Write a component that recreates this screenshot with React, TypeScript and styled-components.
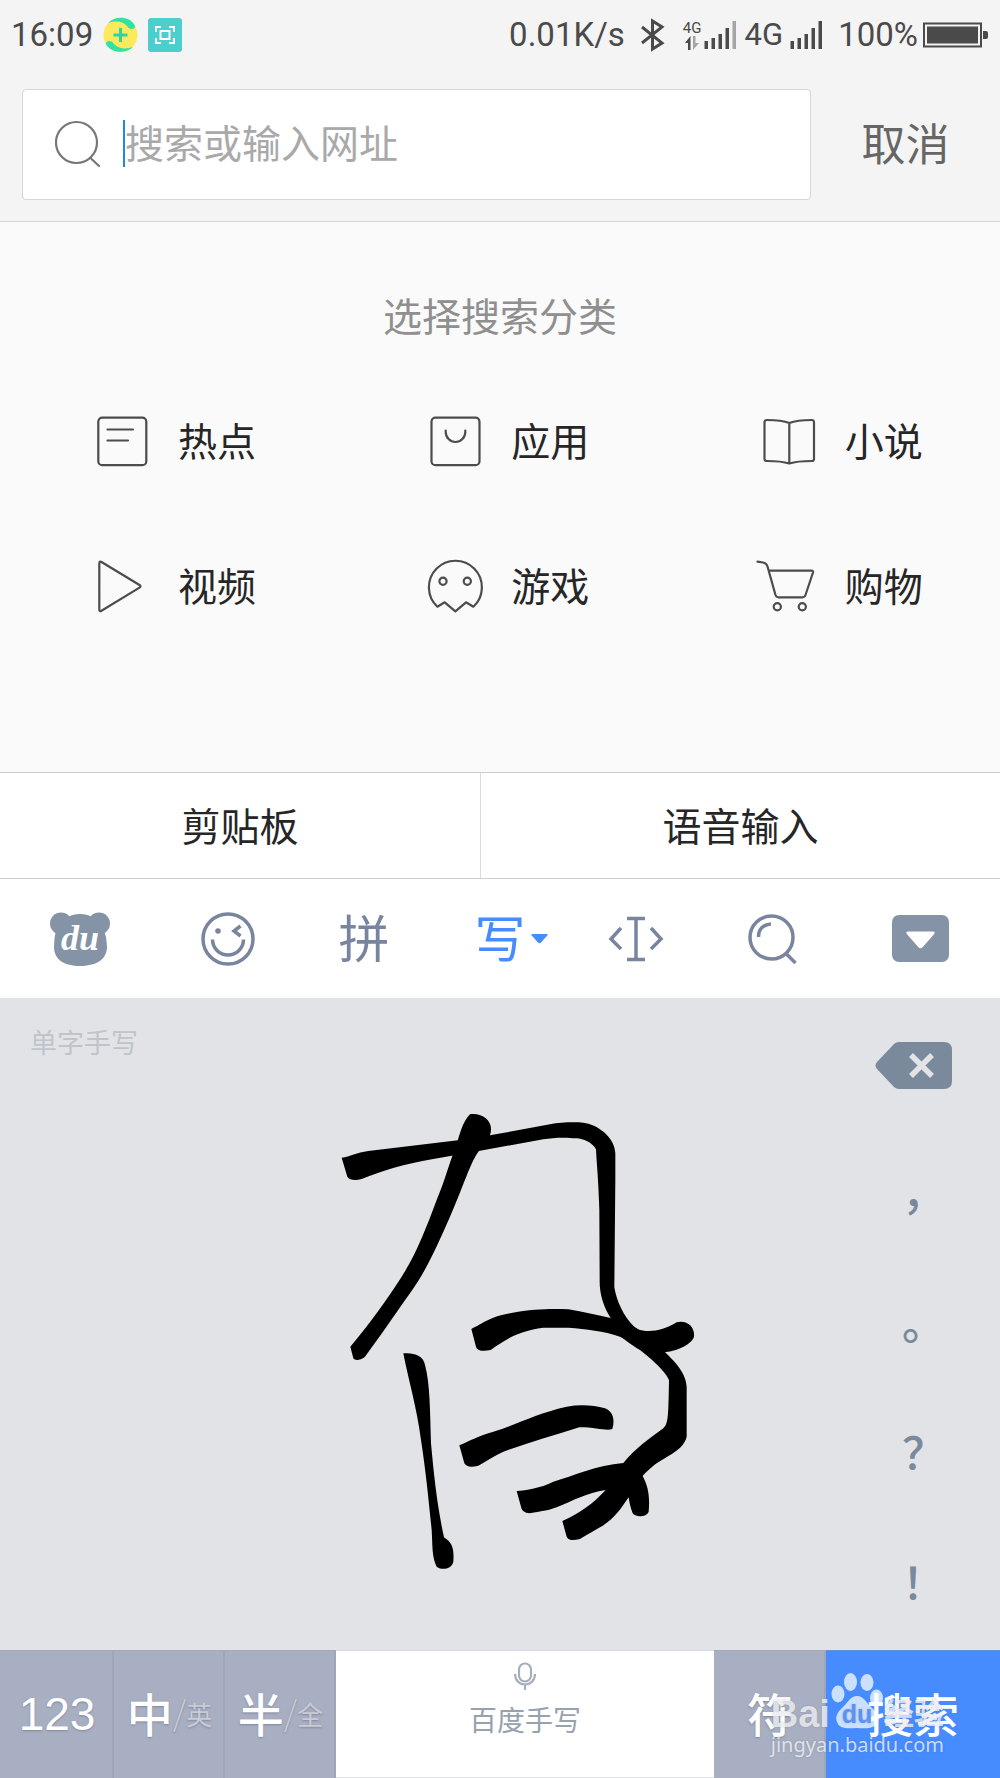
import React from "react";
import styled, { createGlobalStyle } from "styled-components";

const GlobalStyle = createGlobalStyle`
  *, *::before, *::after { box-sizing: border-box; }
  body {
    margin: 0;
    background: #fafafa;
    font-family: "Noto Sans CJK SC", "Noto Sans", sans-serif;
    color: #262626;
  }
  button {
    margin: 0;
    padding: 0;
    border: 0;
    background: none;
    font: inherit;
    color: inherit;
    cursor: pointer;
  }
  svg { display: block; flex: none; }
`;

const Screen = styled.div`
  display: flex;
  flex-direction: column;
  min-height: 100vh;
`;

/* ---------- status bar and search ---------- */

const Top = styled.header`
  background: #f4f4f4;
  border-bottom: 1px solid #d6d6d6;
`;

const StatusBar = styled.div`
  display: flex;
  align-items: center;
  justify-content: space-between;
  height: 70px;
  padding: 0 12px 0 11px;
  font-family: Roboto, "Noto Sans", sans-serif;
  font-size: 33px;
  line-height: 40px;
  color: #4a4a4a;
`;

const StatusGroup = styled.div<{ $gap: number }>`
  display: flex;
  align-items: center;
  gap: ${(p) => p.$gap}px;
`;

const Network = styled.span`
  font-size: 31px;
`;

const DataMark = styled.span`
  display: flex;
  flex-direction: column;
  align-items: center;
  margin-left: 4px;
  font-size: 15px;
  line-height: 16px;
`;

const SearchRow = styled.form`
  display: flex;
  align-items: stretch;
  padding: 19px 0 21px 22px;
`;

const SearchBox = styled.label`
  flex: 1;
  display: flex;
  align-items: center;
  height: 111px;
  padding: 0 32px 2px;
  background: #fff;
  border: 1px solid #d6d6d6;
  border-radius: 4px;
`;

const Caret = styled.span`
  width: 2px;
  height: 47px;
  margin-left: 22px;
  background: #1e88e5;
`;

const SearchInput = styled.input`
  flex: 1;
  min-width: 0;
  height: 60px;
  padding: 0 0 6px;
  border: 0;
  outline: 0;
  background: none;
  font: inherit;
  font-size: 39px;
  caret-color: transparent;
  &::placeholder { color: #a9a9a9; opacity: 1; }
`;

const Cancel = styled.button`
  width: 189px;
  padding-bottom: 6px;
  font-size: 44px;
  color: #666;
`;

/* ---------- categories ---------- */

const Categories = styled.main`
  flex: 1;
  padding: 64px 0 114px;
  background: #fafafa;
`;

const Title = styled.h1`
  margin: 0 0 26px;
  font-size: 39px;
  font-weight: 400;
  line-height: 56px;
  text-align: center;
  color: #8f8f8f;
`;

const CategoryGrid = styled.nav`
  display: grid;
  grid-template-columns: repeat(3, 1fr);
  grid-auto-rows: 145px;
`;

const Category = styled.a`
  display: flex;
  align-items: center;
  gap: 23px;
  padding-left: 89px;
  font-size: 39px;
  color: #262626;
  text-decoration: none;
`;

const CategoryName = styled.span`
  padding-bottom: 4px;
`;

/* ---------- input method ---------- */

const QuickRow = styled.div`
  display: grid;
  grid-template-columns: 12fr 13fr;
  background: #fff;
  border-top: 1px solid #ccc;
  border-bottom: 1px solid #c8d0d0;
`;

const QuickButton = styled.button`
  height: 105px;
  padding-bottom: 4px;
  font-size: 39px;
  & + & { border-left: 1px solid #dcdcdc; }
`;

const Toolbar = styled.div`
  display: grid;
  grid-template-columns: 20fr repeat(5, 17fr) 20fr;
  height: 119px;
  background: #fff;
`;

const Tool = styled.button<{ $active?: boolean }>`
  display: grid;
  grid-template-columns: 1fr auto 1fr;
  align-items: center;
  font-size: 51px;
  line-height: 64px;
  color: ${(p) => (p.$active ? "#468cff" : "#79859e")};
  & > :first-child { grid-column: 2; }
`;

const ToolGlyph = styled.span`
  padding-bottom: 6px;
`;

const Pad = styled.section`
  display: grid;
  grid-template-columns: 413fr 87fr;
  height: 652px;
  background: #e2e3e7;
`;

const Canvas = styled.div`
  min-width: 0;
  overflow: hidden;
`;

const PadLabel = styled.div`
  padding-left: 30px;
  font-size: 27px;
  line-height: 88px;
  color: #bfc4cb;
`;

const Ink = styled.svg`
  margin: 4px 0 0 320px;
`;

const SideKeys = styled.div`
  display: grid;
  grid-template-rows: repeat(5, 1fr);
  padding-top: 2px;
`;

const SideKey = styled.button<{ $glyph?: boolean }>`
  display: flex;
  align-items: center;
  justify-content: center;
  padding-bottom: ${(p) => (p.$glyph ? 8 : 0)}px;
  font-size: 44px;
  font-weight: 500;
  font-feature-settings: "halt";
  color: #7a899c;
`;

const KeyRow = styled.div`
  position: relative;
  display: grid;
  grid-template-columns: 114fr 111fr 111fr 378fr 112fr 174fr;
  height: 128px;
`;

const Key = styled.button<{ $tone?: "plain" | "accent" }>`
  display: flex;
  align-items: center;
  justify-content: center;
  min-width: 0;
  padding-bottom: 6px;
  border-top: 1px solid #a3a9b9;
  box-shadow: inset -2px 0 #9fa6b8;
  background: #a9afc2;
  color: #fff;
  font-size: 46px;
  font-weight: 500;
  text-shadow: 0 1px 2px rgba(90, 98, 120, 0.5);
  ${(p) =>
    p.$tone === "plain" &&
    `
    flex-direction: column;
    gap: 9px;
    padding-bottom: 28px;
    border-color: #d5dbe3;
    box-shadow: inset 0 -1px #dfe1e5;
    background: #fff;
    color: #98a1ae;
    font-size: 28px;
    font-weight: 400;
    line-height: 40px;
    text-shadow: none;
  `}
  ${(p) =>
    p.$tone === "accent" &&
    `
    border-color: #5f8fdf;
    box-shadow: none;
    background: #468cff;
    text-shadow: none;
  `}
`;

const Digits = styled.span`
  padding-top: 4px;
  font-family: "Liberation Sans", Arial, sans-serif;
  font-size: 46px;
  font-weight: 400;
`;

const Slash = styled.span`
  font-size: 34px;
  font-weight: 300;
  color: #c9ccd5;
`;

const Alternate = styled.span`
  padding-top: 4px;
  font-size: 26px;
  font-weight: 400;
  color: #c9ccd5;
`;

const Watermark = styled.div`
  position: absolute;
  right: 56px;
  bottom: 18px;
  color: rgba(255, 255, 255, 0.72);
  text-shadow: 0 0 2px rgba(80, 90, 120, 0.35);
  pointer-events: none;
`;

const WatermarkLogo = styled.div`
  display: flex;
  align-items: flex-end;
  font-family: "Liberation Sans", Arial, "Noto Sans CJK SC", sans-serif;
  font-size: 38px;
  font-weight: 700;
  line-height: 32px;
`;

const WatermarkName = styled.span`
  font-size: 30px;
`;

const WatermarkSite = styled.div`
  font-family: "Noto Sans", sans-serif;
  font-size: 20px;
  line-height: 30px;
`;

/* ---------- drawings ---------- */

const Signal = ({ faded = false }: { faded?: boolean }) => (
  <svg width="33" height="28" viewBox="0 0 33 28" fill="#4a4a4a">
    <path d="M0.500 20h3.500v8h-3.500zM7.500 17h3.500v11h-3.500zM14.500 13h3.500v15h-3.500zM21.500 7h3.500v21h-3.500z" />
    <path d="M28.500 0h3.500v28h-3.500z" fill={faded ? "#a5a5a5" : "#4a4a4a"} />
  </svg>
);

const CategoryIcon = ({ children }: { children: React.ReactNode }) => (
  <svg
    width="66"
    height="66"
    viewBox="0 0 66 66"
    fill="none"
    stroke="#4c4c4c"
    strokeWidth="2.2"
    strokeLinecap="round"
    strokeLinejoin="round"
  >
    {children}
  </svg>
);

const categories = [
  {
    name: "热点",
    icon: (
      <>
        <rect x="9.300" y="9.700" width="48" height="47.500" rx="4" />
        <path d="M18.500 21.500H44M18.500 32.500H39" />
      </>
    ),
  },
  {
    name: "应用",
    icon: (
      <>
        <rect x="9.500" y="9.700" width="48" height="47.500" rx="4" />
        <path d="M23.700 22.500v1.500a9.800 10 0 0 0 19.600 0v-1.500" />
      </>
    ),
  },
  {
    name: "小说",
    icon: (
      <path d="M33.300 15C27 12.500 20 12 11 12q-2.500 0-2.500 2.500V51q0 2 2.500 2c9 0 16 .500 22.300 2.500C39.500 53.500 47 53 56 53q2 0 2-2V14.500Q58 12 56 12C47 12 39.500 12.500 33.300 15V55.500" />
    ),
  },
  {
    name: "视频",
    icon: <path d="M10.300 10.500V56.500q0 2.500 2.200 1.200L50.500 34.600q2-1.300 0-2.600L12.500 9q-2.200-1.200-2.200 1.500Z" />,
  },
  {
    name: "游戏",
    icon: (
      <>
        <path d="M15.400 53.700A26.500 26.500 0 1 1 51.400 53.700L44 49.300 33.400 58.300 22.700 49.300Z" />
        <circle cx="21" cy="28.200" r="3.600" />
        <circle cx="45.300" cy="28.200" r="3.600" />
      </>
    ),
  },
  {
    name: "购物",
    icon: (
      <>
        <path d="M1.500 8.700 7 9.500q3.500.500 4.500 4L19.500 42q.800 2.300 3 2.300H46.500q2.200 0 3-2.300L57 19.500q.500-1.800-1.500-1.800H12.700" />
        <circle cx="21.300" cy="53.700" r="3.600" />
        <circle cx="46.300" cy="53.700" r="3.600" />
      </>
    ),
  },
];

const punctuation = ["，", "。", "？", "！"];

export default function App() {
  return (
    <Screen>
      <GlobalStyle />
      <Top>
        <StatusBar>
          <StatusGroup $gap={10}>
            <span>16:09</span>
            <svg width="35" height="36" viewBox="0 0 35 36">
              <circle cx="17.500" cy="18" r="17" fill="#fdea5c" />
              <path d="M5 6C12-1 25-1 31 7q3 5-3 5-2 0-4-3Q17 2 5 6Z" fill="#30e3a3" />
              <path d="M30 30C23 37 10 36 4 29q-3-5 3-5 2 0 4 3 7 7 19 3Z" fill="#30e3a3" />
              <path d="M17.500 11v14M10.500 18h14" stroke="#2dd3a5" strokeWidth="3" />
            </svg>
            <svg width="34" height="34" viewBox="0 0 34 34">
              <rect width="34" height="34" rx="3" fill="#4bcfce" />
              <path
                d="M8 14V9h5M21 9h5v5M26 20v5h-5M13 25H8v-5M12.500 13h9v8h-9z"
                fill="none"
                stroke="#fff"
                strokeWidth="2"
              />
            </svg>
          </StatusGroup>
          <StatusGroup $gap={7}>
            <span>0.01K/s</span>
            <svg width="40" height="34" viewBox="0 0 40 34" fill="none" stroke="#4a4a4a" strokeWidth="3">
              <path d="M10 9 30 25 20.500 31V3L30 9 10 25" />
            </svg>
            <StatusGroup $gap={3}>
              <DataMark>
                4G
                <svg width="16" height="14" viewBox="0 0 16 14">
                  <path d="M6.500 0v14H4V7H1Z" fill="#4a4a4a" />
                  <path d="M9 14V0h2.500v7H15Z" fill="#a5a5a5" />
                </svg>
              </DataMark>
              <Signal faded />
            </StatusGroup>
            <Network>4G</Network>
            <Signal />
            <StatusGroup $gap={5}>
              <span>&nbsp;100%</span>
              <svg width="65" height="26" viewBox="0 0 65 26" fill="#4a4a4a">
                <rect x="1" y="1.500" width="57" height="23" fill="none" stroke="#4a4a4a" strokeWidth="2" />
                <rect x="4" y="4.500" width="51" height="17" />
                <path d="M60 9h3q2 0 2 2v4q0 2-2 2h-3z" />
              </svg>
            </StatusGroup>
          </StatusGroup>
        </StatusBar>
        <SearchRow onSubmit={(e) => e.preventDefault()}>
          <SearchBox>
            <svg width="46" height="48" viewBox="0 0 46 48" fill="none" stroke="#777" strokeWidth="2.200" strokeLinecap="round">
              <circle cx="21.500" cy="22.500" r="20.500" />
              <path d="m35.500 38 8.500 8" />
            </svg>
            <Caret />
            <SearchInput type="text" aria-label="搜索或输入网址" placeholder="搜索或输入网址" />
          </SearchBox>
          <Cancel type="button">取消</Cancel>
        </SearchRow>
      </Top>

      <Categories>
        <Title>选择搜索分类</Title>
        <CategoryGrid>
          {categories.map((c) => (
            <Category key={c.name} href="#">
              <CategoryIcon>{c.icon}</CategoryIcon>
              <CategoryName>{c.name}</CategoryName>
            </Category>
          ))}
        </CategoryGrid>
      </Categories>

      <QuickRow>
        <QuickButton>剪贴板</QuickButton>
        <QuickButton>语音输入</QuickButton>
      </QuickRow>

      <Toolbar>
        <Tool aria-label="百度输入法">
          <svg width="60" height="54" viewBox="0 0 60 54" fill="#8493a6">
            <circle cx="11" cy="11.500" r="11" />
            <circle cx="49" cy="11.500" r="11" />
            <path d="M30 2C40 2 50 7 54 18q3 8 3 17C57 48 45 54 30 54S4 48 4 35q0-9 2-17C10 7 20 2 30 2Z" />
            <text
              x="30"
              y="38"
              textAnchor="middle"
              fill="#fff"
              fontFamily="Liberation Serif, serif"
              fontSize="36"
              fontStyle="italic"
              fontWeight="700"
            >
              du
            </text>
          </svg>
        </Tool>
        <Tool aria-label="表情">
          <svg width="54" height="54" viewBox="0 0 54 54" fill="none" stroke="#79859e" strokeWidth="3.500">
            <circle cx="27" cy="27" r="25" />
            <path d="M11.500 27.500a15.500 15.500 0 0 0 31 0M39.500 14 33 19l6.500 5" />
            <circle cx="17" cy="19" r="2.800" fill="#79859e" stroke="none" />
          </svg>
        </Tool>
        <Tool>
          <ToolGlyph>拼</ToolGlyph>
        </Tool>
        <Tool $active>
          <ToolGlyph>写</ToolGlyph>
          <svg width="22" height="10" viewBox="0 0 22 10" fill="currentColor">
            <path d="M6.500 0h14q2 0 .800 1.500L15 8.500q-1.500 1.500-3 0L5.700 1.500Q4.500 0 6.500 0Z" />
          </svg>
        </Tool>
        <Tool aria-label="移动光标">
          <svg width="56" height="46" viewBox="0 0 56 46" fill="none" stroke="#79859e" strokeWidth="3.500">
            <path d="M19 2.500h18M19 43.500h18M28 2.500v41M13 12 3 23l10 10M43 12l10 11-10 10" />
          </svg>
        </Tool>
        <Tool aria-label="搜索">
          <svg width="49" height="52" viewBox="0 0 49 52" fill="none" stroke="#79859e" strokeWidth="3.500">
            <circle cx="23.500" cy="24.500" r="21.500" />
            <path d="m38.500 41 9 9M10.500 24q0-12 12.500-13" />
          </svg>
        </Tool>
        <Tool aria-label="收起键盘">
          <svg width="57" height="47" viewBox="0 0 57 47">
            <rect width="57" height="47" rx="7" fill="#8493a6" />
            <path d="M16.500 16.500h24q3.500 0 1.500 2.800L31 31.800q-2.500 3-5 0L15 19.300q-2-2.800 1.500-2.800Z" fill="#fff" />
          </svg>
        </Tool>
      </Toolbar>

      <Pad>
        <Canvas>
          <PadLabel>单字手写</PadLabel>
          <Ink width="400" height="500" viewBox="0 0 1200 1500" fill="#000">
            <path d="M65 203C90 200 110 188 145 183L420 150 510 136 690 103C720 97 760 96 790 98C830 102 885 140 886 190V270L883 590C888 630 915 690 952 717C985 730 1030 722 1070 697C1095 690 1125 705 1122 740C1115 765 1060 787 1030 786C980 770 910 735 872 684C850 650 838 610 839 570L838 360C836 280 830 220 828 178C815 155 790 147 770 145C740 142 700 142 670 148L480 182 340 207C250 222 180 245 125 267C105 272 88 270 82 260Z" />
            <path d="M450 73C485 68 515 90 513 120C512 140 500 160 475 185C450 220 430 290 390 380C350 470 320 540 270 610C220 680 180 740 135 800C120 812 105 812 100 805L91 770C150 700 200 630 245 560C290 490 320 410 350 330C375 270 385 230 398 195C410 170 415 140 425 115C432 98 440 82 450 73Z" />
            <path d="M250 790C280 787 310 795 315 825C330 880 330 960 333 1060C342 1160 352 1250 372 1342C400 1360 402 1380 400 1415C395 1440 360 1440 350 1430C335 1400 338 1370 335 1320C325 1220 318 1150 303 1050C290 950 265 870 250 790Z" />
            <path d="M454 717C490 700 510 680 570 670C650 655 700 657 745 658C790 665 830 675 875 685L950 715 1035 786C1060 812 1098 845 1100 890V1040C1090 1080 1050 1092 1010 1120C990 1135 975 1150 968 1158C985 1190 990 1220 986 1265C980 1282 945 1282 938 1270C930 1250 928 1235 926 1222C900 1260 880 1290 840 1312C810 1330 800 1335 780 1347C760 1352 745 1352 740 1340L727 1293C780 1270 820 1240 857 1200C800 1208 760 1232 710 1252C680 1264 650 1265 630 1270C612 1268 606 1262 603 1250L590 1203C620 1200 660 1195 700 1175C760 1158 830 1125 910 1119C945 1075 990 1045 1030 1015C1045 1000 1045 980 1047 870C1040 850 1000 810 960 780C930 762 915 748 900 740C850 722 800 718 745 713H670C600 722 560 745 512 780C490 785 472 783 468 770Z" />
            <path d="M418 1066C450 1052 470 1040 520 1025C600 1000 650 970 740 950C780 943 820 945 855 955C880 965 885 990 877 1017C860 1024 830 1012 778 1012C700 1037 620 1060 550 1085C520 1100 500 1112 475 1127C455 1132 440 1132 433 1120Z" />
          </Ink>
        </Canvas>
        <SideKeys>
          <SideKey aria-label="删除">
            <svg width="77" height="47" viewBox="0 0 77 47">
              <path d="M24 0H69q8 0 8 8V39q0 8-8 8H24q-3 0-5-2L2 27Q-1 23.500 2 20L19 2q2-2 5-2Z" fill="#7a899c" />
              <path d="m36 13 21 21M57 13 36 34" stroke="#e2e3e7" strokeWidth="5.500" />
            </svg>
          </SideKey>
          {punctuation.map((mark) => (
            <SideKey key={mark} $glyph>
              {mark}
            </SideKey>
          ))}
        </SideKeys>
      </Pad>

      <KeyRow>
        <Key>
          <Digits>123</Digits>
        </Key>
        <Key>
          中<Slash>/</Slash>
          <Alternate>英</Alternate>
        </Key>
        <Key>
          半<Slash>/</Slash>
          <Alternate>全</Alternate>
        </Key>
        <Key $tone="plain">
          <svg width="22" height="28" viewBox="0 0 22 28" fill="none" stroke="#a5aeba" strokeWidth="2.200">
            <rect x="5" y="1.500" width="12" height="18" rx="6" />
            <path d="M1 12c0 14 20 14 20 0M11 22.500V28" />
          </svg>
          百度手写
        </Key>
        <Key>符</Key>
        <Key $tone="accent">搜索</Key>
        <Watermark>
          <WatermarkLogo>
            Bai
            <svg width="54" height="58" viewBox="0 0 54 58" fill="#fff">
              <g fillOpacity="0.72">
                <ellipse cx="8" cy="22" rx="6.500" ry="8.500" />
                <ellipse cx="20.500" cy="10" rx="6.500" ry="9" />
                <ellipse cx="37" cy="10.500" rx="6.500" ry="8.500" />
                <ellipse cx="46.500" cy="26" rx="6.500" ry="8.500" />
                <path d="M27 24c7 0 10 8 15 12 5 5 7 9 5 14-2 6-8 7-20 6-12 1-18 0-20-6-2-5 0-9 5-14 5-4 8-12 15-12Z" />
              </g>
              <text
                x="27"
                y="51"
                textAnchor="middle"
                fill="#5b93f5"
                fontFamily="Liberation Sans, sans-serif"
                fontSize="25"
                fontWeight="700"
              >
                du
              </text>
            </svg>
            <WatermarkName>经验</WatermarkName>
          </WatermarkLogo>
          <WatermarkSite>jingyan.baidu.com</WatermarkSite>
        </Watermark>
      </KeyRow>
    </Screen>
  );
}
